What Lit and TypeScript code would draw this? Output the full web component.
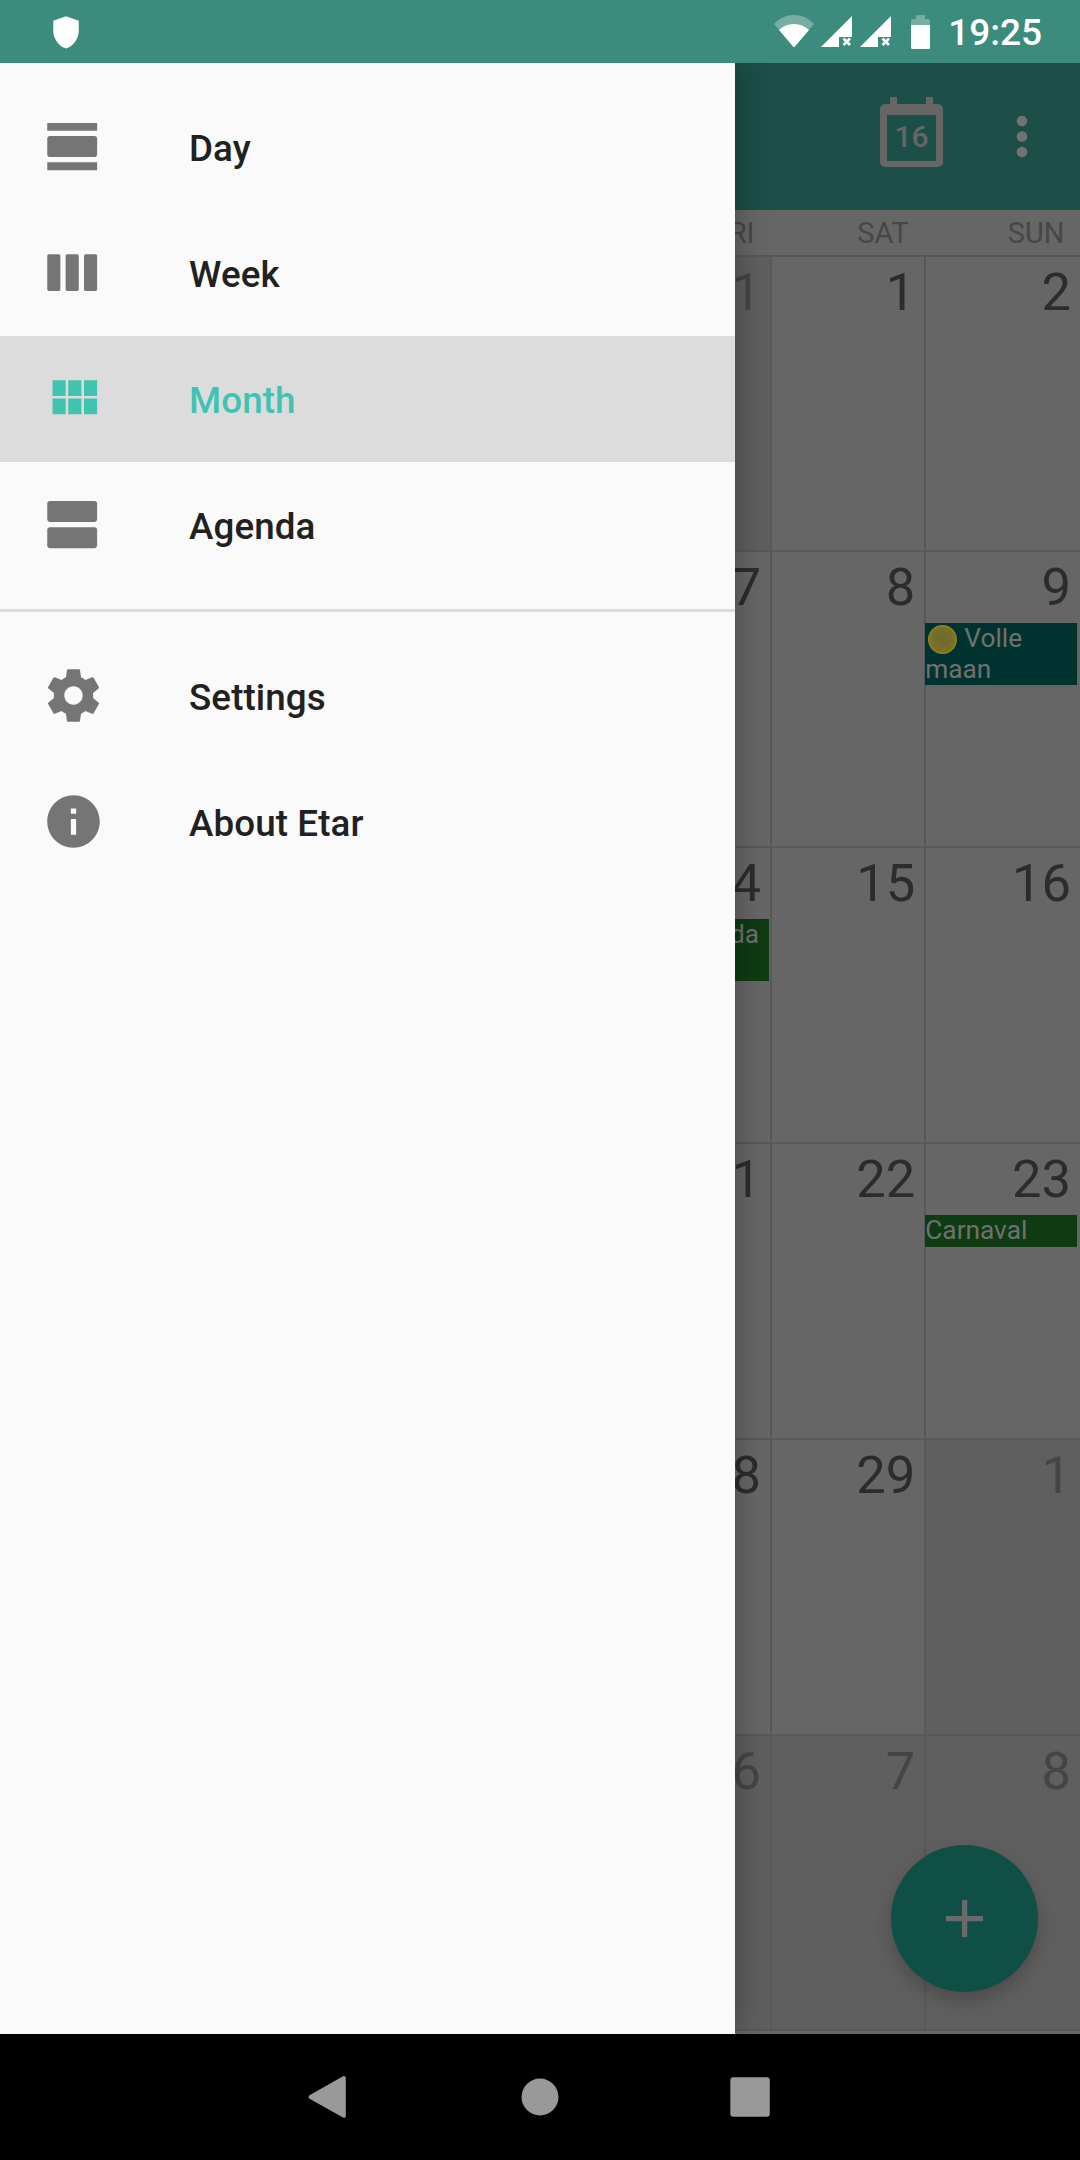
import { LitElement, TemplateResult, css, html, nothing } from 'lit';
import { customElement } from 'lit/decorators.js';

type NavItem = { label: string; icon: TemplateResult; selected?: boolean };
type CalEvent = { text: string; color: string; moon?: boolean; tall?: boolean; clipped?: boolean };
type Cell = { day: number; faded?: boolean; event?: CalEvent };

const icon = (d: string) => html`<svg class="nav-icon" viewBox="0 0 24 24"><path d=${d}></path></svg>`;

const weekIcon = html`<svg class="nav-icon" viewBox="0 0 24 24">
  <rect x="2" y="5" width="5" height="14" rx=".6"></rect>
  <rect x="9" y="5" width="5" height="14" rx=".6"></rect>
  <rect x="16" y="5" width="5" height="14" rx=".6"></rect>
</svg>`;

const mainItems: NavItem[] = [
  { label: 'Day', icon: icon('M2 21h19v-3H2v3zM20 8H3c-.55 0-1 .45-1 1v6c0 .55.45 1 1 1h17c.55 0 1-.45 1-1V9c0-.55-.45-1-1-1zM2 3v3h19V3H2z') },
  { label: 'Week', icon: weekIcon },
  { label: 'Month', selected: true, icon: icon('M4 11h5V5H4v6zm0 7h5v-6H4v6zm6 0h5v-6h-5v6zm6 0h5v-6h-5v6zm-6-7h5V5h-5v6zm6-6v6h5V5h-5z') },
  { label: 'Agenda', icon: icon('M20 13H3c-.55 0-1 .45-1 1v6c0 .55.45 1 1 1h17c.55 0 1-.45 1-1v-6c0-.55-.45-1-1-1zm0-10H3c-.55 0-1 .45-1 1v6c0 .55.45 1 1 1h17c.55 0 1-.45 1-1V4c0-.55-.45-1-1-1z') },
];

const extraItems: NavItem[] = [
  { label: 'Settings', icon: icon('M19.43 12.98c.04-.32.07-.64.07-.98s-.03-.66-.07-.98l2.11-1.65c.19-.15.24-.42.12-.64l-2-3.46c-.12-.22-.39-.3-.61-.22l-2.49 1c-.52-.4-1.08-.73-1.69-.98l-.38-2.65C14.46 2.18 14.25 2 14 2h-4c-.25 0-.46.18-.49.42l-.38 2.65c-.61.25-1.17.59-1.69.98l-2.49-1c-.23-.09-.49 0-.61.22l-2 3.46c-.13.22-.07.49.12.64l2.11 1.65c-.04.32-.07.65-.07.98s.03.66.07.98l-2.11 1.65c-.19.15-.24.42-.12.64l2 3.46c.12.22.39.3.61.22l2.49-1c.52.4 1.08.73 1.69.98l.38 2.65c.03.24.24.42.49.42h4c.25 0 .46-.18.49-.42l.38-2.65c.61-.25 1.17-.59 1.69-.98l2.49 1c.23.09.49 0 .61-.22l2-3.46c.12-.22.07-.49-.12-.64l-2.11-1.65zM12 15.5c-1.93 0-3.5-1.57-3.5-3.5s1.57-3.5 3.5-3.5 3.5 1.57 3.5 3.5-1.57 3.5-3.5 3.5z') },
  { label: 'About Etar', icon: icon('M12 2C6.48 2 2 6.48 2 12s4.48 10 10 10 10-4.48 10-10S17.52 2 12 2zm1 15h-2v-6h2v6zm0-8h-2V7h2v2z') },
];

const GREEN = '#0e3b11';

// only the columns that show beside the drawer
const cells: Cell[] = [
  { day: 31, faded: true }, { day: 1 }, { day: 2 },
  { day: 7 }, { day: 8 }, { day: 9, event: { text: 'Volle maan', color: '#003330', moon: true, tall: true } },
  { day: 14, event: { text: 'da', color: GREEN, tall: true, clipped: true } }, { day: 15 }, { day: 16 },
  { day: 21 }, { day: 22 }, { day: 23, event: { text: 'Carnaval', color: GREEN } },
  { day: 28 }, { day: 29 }, { day: 1, faded: true },
  { day: 6, faded: true }, { day: 7, faded: true }, { day: 8, faded: true },
];

const signal = html`<svg width="31" height="31" viewBox="0 0 31 31">
  <path class="white" d="M31 0v21H18v10H0z"></path>
  <path class="cross" d="M22.5 22.5l6.5 6.5m0-6.5l-6.5 6.5"></path>
</svg>`;

const moon = html`<svg class="moon" width="29" height="29" viewBox="0 0 29 29">
  <defs>
    <radialGradient id="moonFill">
      <stop offset="0" stop-color="#6d6a2c"></stop>
      <stop offset=".8" stop-color="#757029"></stop>
      <stop offset="1" stop-color="#968420"></stop>
    </radialGradient>
  </defs>
  <circle cx="14.5" cy="14.5" r="14.5" fill="url(#moonFill)"></circle>
  <g fill="#94701c">
    <circle cx="5" cy="18" r="1.6"></circle>
    <circle cx="9" cy="23" r="1.3"></circle>
    <circle cx="16" cy="24" r="1.5"></circle>
    <circle cx="23" cy="20" r="1.4"></circle>
    <circle cx="24" cy="11" r="1.2"></circle>
    <circle cx="20" cy="6" r="1"></circle>
  </g>
</svg>`;

@customElement('app-root')
export class AppRoot extends LitElement {
  static override styles = css`
    :host {
      display: block;
      width: 1080px;
      height: 2160px;
      overflow: hidden;
      font-family: Roboto, 'Noto Sans', sans-serif;
    }

    .phone {
      display: flex;
      flex-direction: column;
      height: 100%;
    }

    .status {
      flex: none;
      height: 63px;
      background: #3b8c7c;
      display: flex;
      align-items: center;
      justify-content: space-between;
      padding: 0 38px 0 48px;
      box-sizing: border-box;
    }

    .status svg {
      display: block;
    }

    .status-right {
      display: flex;
      align-items: center;
    }

    .status-right .wifi {
      margin-right: 7px;
      margin-top: -2px;
    }

    .status-right .second {
      margin-left: 8px;
    }

    .status-right .battery {
      margin-left: 20px;
    }

    .white {
      fill: #fff;
    }

    .faint {
      fill: #fff;
      opacity: 0.3;
    }

    .cross {
      stroke: #fff;
      stroke-width: 2.6;
      fill: none;
    }

    .time {
      margin-left: 18.5px;
      color: #fff;
      font-size: 37px;
      font-weight: 500;
      line-height: 63px;
      padding-top: 2px;
    }

    .main {
      flex: 1;
      position: relative;
      overflow: hidden;
      background: #666;
    }

    .appbar {
      height: 147px;
      background: #1b4f47;
      display: flex;
      justify-content: flex-end;
      align-items: center;
      padding-right: 52px;
      box-sizing: border-box;
    }

    .appbar svg {
      display: block;
    }

    .today {
      margin: 0 73px 9px 0;
    }

    .today text {
      font-family: Roboto, sans-serif;
      font-size: 30px;
      font-weight: 500;
      fill: #666;
    }

    .weekdays,
    .grid {
      display: grid;
      grid-template-columns: 154.3px 154.3px 155.7px;
      margin-left: 615.7px;
    }

    .weekdays {
      height: 44.6px;
      line-height: 46px;
      font-size: 29px;
      color: #474747;
      text-align: right;
      background: #666;
    }

    .weekdays span {
      padding-right: 15.5px;
    }

    .grid {
      grid-auto-rows: 295.8px;
      border-bottom: 2px solid #585858;
    }

    .cell {
      box-sizing: border-box;
      border-top: 2px solid #585858;
      border-left: 2px solid #585858;
      padding-top: 5px;
      background: #666;
    }

    .cell.faded {
      background: #5f5f5f;
    }

    .num {
      font-size: 52.5px;
      line-height: 61px;
      color: #2c2c2c;
      text-align: right;
      padding-right: 9px;
    }

    .faded .num {
      color: #454545;
    }

    .event {
      margin: 5px 3px 0 -1px;
      height: 32px;
      font-size: 26.25px;
      line-height: 31px;
      color: #707070;
    }

    .event.tall {
      height: 62px;
    }

    .event.clipped {
      margin-right: 1px;
      text-align: right;
      padding-right: 10px;
    }

    .moon {
      vertical-align: -7px;
      margin: 0 7px 0 3px;
    }

    .fab {
      position: absolute;
      right: 42px;
      bottom: 42px;
      width: 147px;
      height: 147px;
      border-radius: 50%;
      background: #0f4f46;
      box-shadow: 0 8px 18px rgba(0, 0, 0, 0.22);
      display: flex;
      align-items: center;
      justify-content: center;
    }

    .fab svg {
      fill: #6a6a6a;
    }

    .drawer {
      position: absolute;
      left: 0;
      top: 0;
      bottom: 0;
      width: 735px;
      background: #fafafa;
      box-shadow: 0 0 30px rgba(0, 0, 0, 0.32);
    }

    .nav-list {
      padding: 21px 0;
    }

    .nav-list + .nav-list {
      border-top: 3px solid #dcdcdc;
    }

    .nav-row {
      height: 126px;
      display: flex;
      align-items: center;
      padding-left: 42px;
      gap: 84px;
      font-size: 36.75px;
      font-weight: 500;
      letter-spacing: 0.1px;
      color: #212121;
    }

    .nav-row span {
      padding-top: 2px;
    }

    .nav-row.selected {
      background: #dcdcdc;
      color: #40c4b0;
    }

    .nav-icon {
      width: 63px;
      height: 63px;
      flex: none;
      fill: #757575;
      margin-bottom: 2px;
    }

    .selected .nav-icon {
      fill: #40c4b0;
    }

    .softkeys {
      flex: none;
      height: 126px;
      background: #000;
      display: flex;
      align-items: center;
      justify-content: center;
      gap: 148px;
    }

    .softkeys svg {
      display: block;
      fill: #999;
    }
  `;

  private renderNav(items: NavItem[]) {
    return html`<div class="nav-list">
      ${items.map(
        (item) => html`<div class="nav-row ${item.selected ? 'selected' : ''}">
          ${item.icon}
          <span>${item.label}</span>
        </div>`
      )}
    </div>`;
  }

  private renderCell(cell: Cell) {
    const ev = cell.event;
    return html`<div class="cell ${cell.faded ? 'faded' : ''}">
      <div class="num">${cell.day}</div>
      ${ev
        ? html`<div
            class="event ${ev.tall ? 'tall' : ''} ${ev.clipped ? 'clipped' : ''}"
            style="background:${ev.color}"
          >
            ${ev.moon ? moon : nothing}${ev.text}
          </div>`
        : nothing}
    </div>`;
  }

  override render(): TemplateResult {
    return html`
      <div class="phone">
        <div class="status">
          <svg width="36" height="36" viewBox="0 0 24 24">
            <path class="white" d="M12 1.5L3.5 4.5v6.5c0 5.5 3.6 10.5 8.5 12 4.9-1.5 8.5-6.5 8.5-12V4.5z"></path>
          </svg>
          <div class="status-right">
            <svg class="wifi" width="40" height="32" viewBox="0 0 40 32">
              <path class="faint" d="M0 9C5.500 3.200 12.500 0 20 0s14.500 3.200 20 9L20 32z"></path>
              <path class="white" d="M5 15c4-3.800 9.200-6 15-6s11 2.200 15 6L21 31.500a1.300 1.300 0 0 1-2 0z"></path>
            </svg>
            ${signal}
            <div class="second">${signal}</div>
            <svg class="battery" width="19" height="34" viewBox="0 0 19 34">
              <path class="faint" d="M5 1a1 1 0 0 1 1-1h7a1 1 0 0 1 1 1v3h3.500A1.500 1.500 0 0 1 19 5.500V10H0V5.500A1.500 1.500 0 0 1 1.500 4H5z"></path>
              <path class="white" d="M0 10h19v22.500a1.500 1.500 0 0 1-1.500 1.500h-16A1.500 1.500 0 0 1 0 32.500z"></path>
            </svg>
            <div class="time">19:25</div>
          </div>
        </div>

        <div class="main">
          <div class="appbar">
            <svg class="today" width="63" height="70" viewBox="0 0 63 70">
              <path
                fill="#666"
                fill-rule="evenodd"
                d="M10 0h7v7h29V0h7v7h5a5 5 0 0 1 5 5v53a5 5 0 0 1-5 5H5a5 5 0 0 1-5-5V12a5 5 0 0 1 5-5h5zM7 18v46h49V18z"
              ></path>
              <text x="31.500" y="50" text-anchor="middle">16</text>
            </svg>
            <svg width="12" height="43" viewBox="0 0 12 43" fill="#727272">
              <circle cx="6" cy="6" r="5.300"></circle>
              <circle cx="6" cy="21.500" r="5.300"></circle>
              <circle cx="6" cy="37" r="5.300"></circle>
            </svg>
          </div>
          <div class="weekdays"><span>FRI</span><span>SAT</span><span>SUN</span></div>
          <div class="grid">${cells.map((c) => this.renderCell(c))}</div>
          <div class="fab">
            <svg width="37" height="37" viewBox="0 0 37 37"><path d="M16 0h5.300v16H37v5.300H21.300V37H16V21.300H0V16h16z"></path></svg>
          </div>
          <div class="drawer">${this.renderNav(mainItems)} ${this.renderNav(extraItems)}</div>
        </div>

        <div class="softkeys">
          <svg width="64" height="64" viewBox="0 0 64 64">
            <path d="M13.500 30.300L47 11.200c1.300-.7 2.800.2 2.800 1.700v38c0 1.500-1.500 2.400-2.800 1.700L13.500 33.700c-1.300-.8-1.300-2.600 0-3.400z"></path>
          </svg>
          <svg width="64" height="64" viewBox="0 0 64 64"><circle cx="32" cy="32" r="18.500"></circle></svg>
          <svg width="64" height="64" viewBox="0 0 64 64"><rect x="10.300" y="12.200" width="39.500" height="39.500" rx="3"></rect></svg>
        </div>
      </div>
    `;
  }
}
